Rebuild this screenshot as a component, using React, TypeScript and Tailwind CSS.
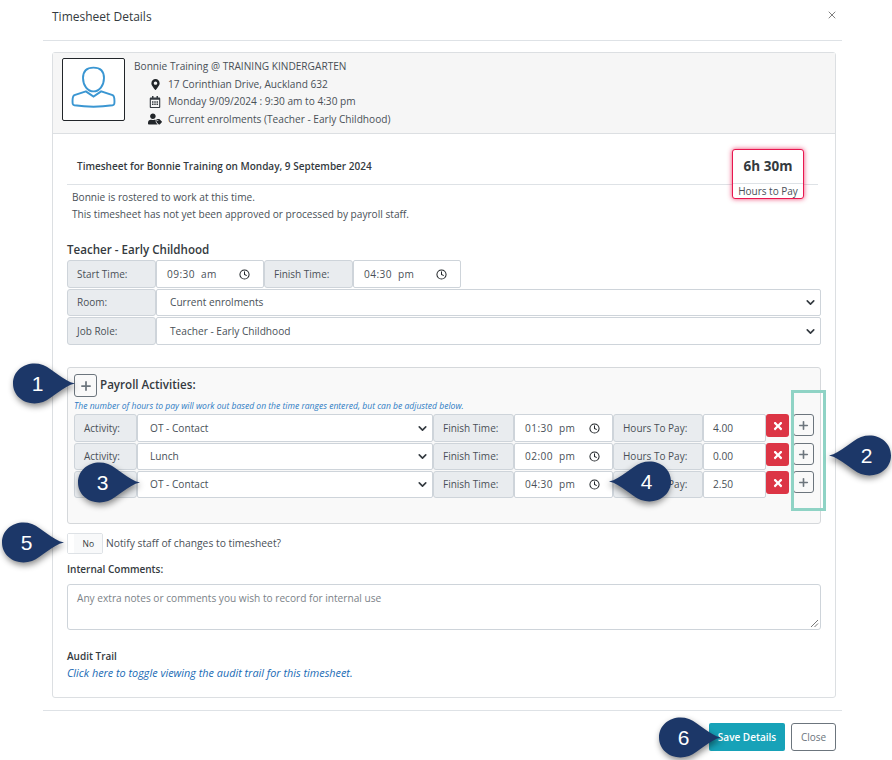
import React from "react";
import { FaMapMarkerAlt, FaRegCalendarAlt, FaUserTag, FaTimes } from "react-icons/fa";
import { ChevronDown, Plus, Clock, X } from "lucide-react";

function Callout({ n, flip, cls }: { n: string; flip?: boolean; cls: string }) {
  return (
    <div className={"absolute w-[62px] h-[41px] " + cls}>
      <svg viewBox="0 0 62 41" className={"absolute inset-0 w-[62px] h-[41px] overflow-visible drop-shadow-[1px_3px_3px_rgba(0,0,0,0.45)] " + (flip ? "-scale-x-100" : "")}>
        <path d="M62 20.5C50 18 40 6 30 2C15 -3 0 6 0 20.5C0 35 15 44 30 39C40 35 50 23 62 20.5Z" fill="#1c3768" />
      </svg>
      <span className={"absolute top-0 h-[41px] w-[49px] flex items-center justify-center text-white text-[21px] font-['Liberation_Sans',sans-serif] " + (flip ? "right-0" : "left-0")}>{n}</span>
    </div>
  );
}

const Label = ({ w, children }: { w: string; children: React.ReactNode }) => (
  <div className={`${w} h-full shrink-0 flex items-center pl-[9px] text-[10px] bg-[#e9ecef] border border-[#ced4da] rounded-[3px] text-[#495057]`}>{children}</div>
);

const Field = ({ w, children, cls = "" }: { w: string; children: React.ReactNode; cls?: string }) => (
  <div className={`${w} h-full shrink-0 flex items-center bg-white border border-[#ced4da] rounded-[2px] text-[#495057] ${cls}`}>{children}</div>
);

const TimeField = ({ w, value, gap }: { w: string; value: string; gap: string }) => (
  <Field w={w} cls="pl-[10px]">
    <span className="whitespace-pre tracking-[0.4px]">{value}</span>
    <Clock size={11} strokeWidth={2.2} className={`${gap} text-[#212529]`} />
  </Field>
);

const SelectField = ({ w, value, pl }: { w: string; value: string; pl: string }) => (
  <Field w={w} cls={`${pl} pr-[3px] justify-between`}>
    <span>{value}</span>
    <ChevronDown size={13} strokeWidth={3} className="text-[#343a40]" />
  </Field>
);

function ActivityRow({ name, time, hours, h }: { name: string; time: string; hours: string; h: string }) {
  return (
    <div className={`flex items-start ${h}`}>
      <div className="flex h-full">
        <Label w="w-[63px]">Activity:</Label>
        <SelectField w="w-[296px]" value={name} pl="pl-[12px]" />
        <Label w="w-[81px]">Finish Time:</Label>
        <TimeField w="w-[99px]" value={time} gap="ml-[14px]" />
        <Label w="w-[90px]">Hours To Pay:</Label>
        <Field w="w-[63px]" cls="pl-[9px]">{hours}</Field>
      </div>
      <div className="w-[23px] h-[23px] bg-[#dc3545] rounded-[3px] flex items-center justify-center text-white">
        <FaTimes size={12} />
      </div>
      <div className="w-[21px] h-[22px] ml-[4px] border border-[#6c757d] rounded-[3px] flex items-center justify-center text-[#6c757d]">
        <Plus size={13} strokeWidth={3} />
      </div>
    </div>
  );
}

export default function App() {
  return (
    <div className="relative w-[892px] h-[760px] bg-white overflow-hidden font-['Open_Sans',sans-serif] text-[10.15px] leading-[15px] text-[#495057]">
      <div className="mx-[43px] w-[799px] h-[41px] border-b border-[#dee2e6] flex items-start justify-between pl-[9px] pr-[4px] pt-[8px]">
        <div className="text-[12px] leading-[18px] text-[#343a40]">Timesheet Details</div>
        <X size={12} strokeWidth={2} className="mt-[1px] text-[#808080]" />
      </div>

      <div className="ml-[52px] mt-[11px] w-[784px] h-[646px] border border-[#dcdfe2] rounded-[3px]">
        <div className="h-[81px] bg-[#f6f6f6] border-b border-[#dcdfe2] flex pl-[9px] pt-[5px]">
          <div className="w-[63px] h-[63px] border border-[#212529] rounded-[2px] bg-white flex items-center justify-center">
            <svg viewBox="0 0 64 64" className="w-[61px] h-[61px]" fill="none" stroke="#3a96d2" strokeWidth="2">
              <path d="M32 9C25 9 21 13 21 20C21 28 26 34 32 34C38 34 43 28 43 20C43 13 39 9 32 9Z" />
              <path d="M24 34L12 38C10 39 10 41 10 44C10 47 10 48 12 48.500C25 50.500 39 50.500 52 48.500C54 48 54 47 54 44C54 41 54 39 52 38L40 34L32 39.500Z" />
            </svg>
          </div>
          <div className="ml-[9px] flex flex-col">
            <div className="h-[18px] pt-[1px]">Bonnie Training @ TRAINING KINDERGARTEN</div>
            <div className="h-[17px] flex items-center"><span className="w-[34px] flex justify-center pl-[10px] -translate-x-[1px] text-[#212529]"><FaMapMarkerAlt size={11} /></span>17 Corinthian Drive, Auckland 632</div>
            <div className="h-[17px] flex items-center"><span className="w-[34px] flex justify-center pl-[10px] -translate-x-[1px] text-[#343a40]"><FaRegCalendarAlt size={12} /></span>Monday 9/09/2024 : 9:30 am to 4:30 pm</div>
            <div className="h-[18px] flex items-center"><span className="w-[34px] flex justify-center pl-[10px] -translate-x-[1px] text-[#212529]"><FaUserTag size={14} /></span>Current enrolments (Teacher - Early Childhood)</div>
          </div>
        </div>

        <div className="relative pl-[14px]">
          <div className="mr-[17px] h-[51px] border-b border-[#dee2e6] pl-[10px] pt-[25px] text-[10px] font-semibold text-[#343a40]">Timesheet for Bonnie Training on Monday, 9 September 2024</div>
          <div className="absolute left-[679px] top-[15px] w-[72px] h-[50px] bg-white border border-[#e8174f] rounded-[3px] shadow-[0_0_5px_rgba(232,23,79,0.8)] flex flex-col text-center">
            <div className="h-[34px] border-b border-[#dee2e6] flex items-center justify-center font-bold text-[13.500px] text-[#343a40]">6h 30m</div>
            <div className="flex-1 leading-[14px] text-[10px]">Hours to Pay</div>
          </div>
          <div className="pl-[5px] pt-[4px] leading-[17px]">
            <div>Bonnie is rostered to work at this time.</div>
            <div>This timesheet has not yet been approved or processed by payroll staff.</div>
          </div>

          <div className="mt-[18px] h-[18px] text-[11.6px] leading-[18px] font-semibold text-[#343a40]">Teacher - Early Childhood</div>
          <div className="flex h-[28px] mt-[1px]">
            <Label w="w-[89px]">Start Time:</Label>
            <TimeField w="w-[108px]" value="09:30  am" gap="ml-[22px]" />
            <Label w="w-[89px]">Finish Time:</Label>
            <TimeField w="w-[108px]" value="04:30  pm" gap="ml-[22px]" />
          </div>
          <div className="flex h-[27px] mt-[1px] w-[754px]">
            <Label w="w-[89px]">Room:</Label>
            <SelectField w="flex-1" value="Current enrolments" pl="pl-[13px]" />
          </div>
          <div className="flex h-[28px] mt-[1px] w-[754px]">
            <Label w="w-[89px]">Job Role:</Label>
            <SelectField w="flex-1" value="Teacher - Early Childhood" pl="pl-[13px]" />
          </div>

          <div className="mt-[22px] w-[754px] h-[157px] bg-[#f9f9f9] border border-[#d5d8db] rounded-[3px] pl-[6px] pt-[6px]">
            <div className="flex items-center h-[23px]">
              <div className="w-[23px] h-[23px] border border-[#6c757d] rounded-[3px] flex items-center justify-center text-[#6c757d]">
                <Plus size={14} strokeWidth={3} />
              </div>
              <div className="ml-[3px] text-[11.6px] font-semibold text-[#343a40] -translate-y-[1px]">Payroll Activities:</div>
            </div>
            <div className="mt-[2px] h-[14px] text-[8.55px] leading-[14px] italic text-[#2d7bc4]">The number of hours to pay will work out based on the time ranges entered, but can be adjusted below.</div>
            <div className="mt-[1px] flex flex-col gap-[1px]">
              <ActivityRow h="h-[28px]" name="OT - Contact" time="01:30  pm" hours="4.00" />
              <ActivityRow h="h-[27px]" name="Lunch" time="02:00  pm" hours="0.00" />
              <ActivityRow h="h-[27px]" name="OT - Contact" time="04:30  pm" hours="2.50" />
            </div>
          </div>

          <div className="mt-[9px] flex items-center h-[21px]">
            <div className="w-[36px] h-[21px] border border-[#dee2e6] rounded-[2px] flex">
              <div className="w-[6px] bg-white" />
              <div className="flex-1 bg-[#f8f9fa] flex items-center justify-end pr-[8px] text-[8.500px] text-[#343a40]">No</div>
            </div>
            <div className="ml-[3px] text-[10.3px]">Notify staff of changes to timesheet?</div>
          </div>
          <div className="mt-[8px] h-[15px] text-[10px] font-semibold text-[#343a40]">Internal Comments:</div>
          <div className="relative mt-[7px] w-[754px] h-[46px] border border-[#ced4da] rounded-[3px] pl-[9px] pt-[6px] text-[#7b8288]">
            Any extra notes or comments you wish to record for internal use
            <svg viewBox="0 0 9 9" className="absolute right-[1px] bottom-[1px] w-[9px] h-[9px]" stroke="#555" strokeWidth="0.8"><path d="M1 8L8 1M4.500 8L8 4.500" /></svg>
          </div>
          <div className="mt-[19px] h-[16px] text-[10px] font-semibold text-[#343a40]">Audit Trail</div>
          <div className="text-[10.85px] italic text-[#1a6bb5]">Click here to toggle viewing the audit trail for this timesheet.</div>
        </div>
      </div>

      <div className="ml-[43px] mt-[12px] w-[799px] border-t border-[#dee2e6] flex justify-end pr-[6px] pt-[12px] gap-[6px]">
        <div className="w-[76px] h-[28px] bg-[#17a2b8] rounded-[2px] flex items-center justify-center text-[10px] font-semibold text-white">Save Details</div>
        <div className="w-[45px] h-[28px] border border-[#6c757d] rounded-[3px] flex items-center justify-center text-[10px] text-[#6c757d]">Close</div>
      </div>

      <div className="absolute left-[791px] top-[390px] w-[35px] h-[121px] border-[3px] border-[#8fd3c5]" />
      <Callout n="1" cls="left-[13px] top-[363px]" />
      <Callout n="2" flip cls="left-[829px] top-[435px]" />
      <Callout n="3" cls="left-[78px] top-[462px]" />
      <Callout n="4" flip cls="left-[609px] top-[461px]" />
      <Callout n="5" cls="left-[2px] top-[522px]" />
      <Callout n="6" cls="left-[659px] top-[717px]" />
    </div>
  );
}
